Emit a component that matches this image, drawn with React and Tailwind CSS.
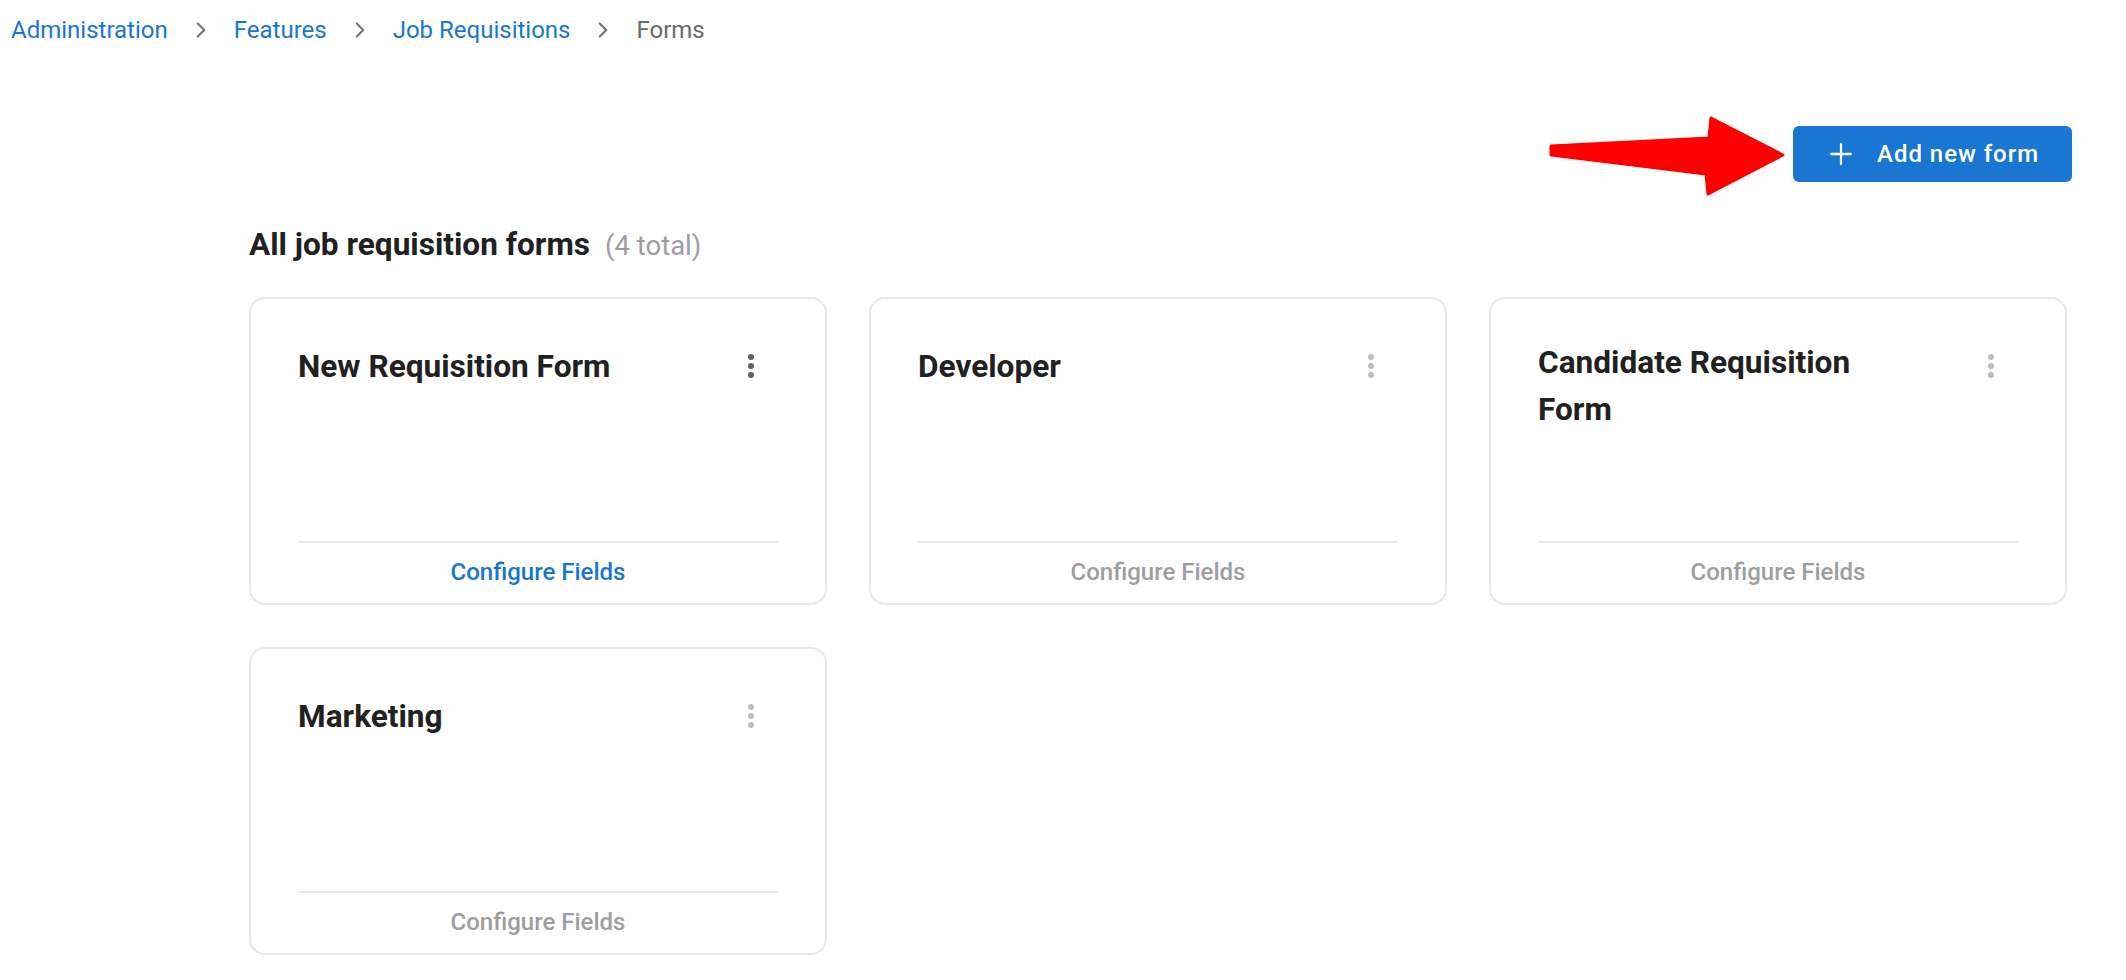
import { ChevronRight, Plus } from 'lucide-react';

const crumbs = ['Administration', 'Features', 'Job Requisitions'];

const forms = [
  { id: 1, name: 'New Requisition Form', active: true },
  { id: 2, name: 'Developer' },
  { id: 3, name: 'Candidate Requisition Form' },
  { id: 4, name: 'Marketing' },
];

const MoreVert = ({ color }) => (
  <svg width="36" height="36" viewBox="0 0 36 36">
    <circle cx="18" cy="9" r="3" fill={color} />
    <circle cx="18" cy="18" r="3" fill={color} />
    <circle cx="18" cy="27" r="3" fill={color} />
  </svg>
);

// red annotation arrow pointing at the button
const PointerArrow = () => (
  <svg width="237" height="86" viewBox="0 0 237 86" className="shrink-0">
    <polygon
      points="2,35 160,27 162,7 234,44 159,83 157,63 2,44"
      fill="#ff0000"
      stroke="#ff0000"
      strokeWidth="3"
      strokeLinejoin="round"
    />
  </svg>
);

const FormCard = ({ form }) => (
  <div className="h-[308px] rounded-[16px] border-2 border-[#e8e8e8] bg-white px-[47px] flex flex-col">
    <div className="flex items-start justify-between pt-[40px]">
      <h3 className="self-center pr-4 max-w-[370px] text-[31.6px] leading-[47px] font-bold text-[#212121]">
        {form.name}
      </h3>
      <div className="w-[54px] h-[54px] shrink-0 flex items-center justify-center">
        <MoreVert color={form.active ? '#616161' : '#bdbdbd'} />
      </div>
    </div>
    <div className="flex-1" />
    <div className="h-[2px] bg-[#e8e8e8]" />
    <div className="h-[60px] flex items-center justify-center pb-[2px]">
      <span
        className={`text-[24px] font-medium ${
          form.active ? 'text-[#1976d2]' : 'text-[#9e9e9e]'
        }`}
      >
        Configure Fields
      </span>
    </div>
  </div>
);

export default function App() {
  return (
    <div className="min-h-screen bg-white font-['Roboto',_'Liberation_Sans',_sans-serif]">
      {/* Breadcrumbs */}
      <nav className="flex items-center gap-[20px] pt-[12px] pl-[11px] text-[24px] leading-[36px]">
        {crumbs.map((c) => (
          <div key={c} className="flex items-center gap-[20px]">
            <span className="text-[#1976d2]">{c}</span>
            <ChevronRight size={26} strokeWidth={2} className="text-[#757575]" />
          </div>
        ))}
        <span className="text-[#6b6b6b]">Forms</span>
      </nav>

      <div className="pl-[249px] pr-[54px]">
        <div className="flex items-center justify-end gap-[7px] mt-[63px]">
          <PointerArrow />
          <button className="h-[56px] flex items-center gap-[19px] pl-[31px] pr-[33px] rounded-[6px] bg-[#1976d2] text-white text-[24px] font-medium tracking-[0.04em]">
            <Plus size={34} strokeWidth={1.6} />
            Add new form
          </button>
        </div>

        <div className="flex items-baseline gap-[15px] mt-[25px]">
          <h2 className="text-[31.6px] leading-[45px] font-bold text-[#212121]">All job requisition forms</h2>
          <span className="text-[27.5px] text-[#9e9e9e]">(4 total)</span>
        </div>

        <div className="grid grid-cols-3 gap-[42px] w-[1818px] mt-[30px] pb-[24px]">
          {forms.map((f) => (
            <FormCard key={f.id} form={f} />
          ))}
        </div>
      </div>
    </div>
  );
}
